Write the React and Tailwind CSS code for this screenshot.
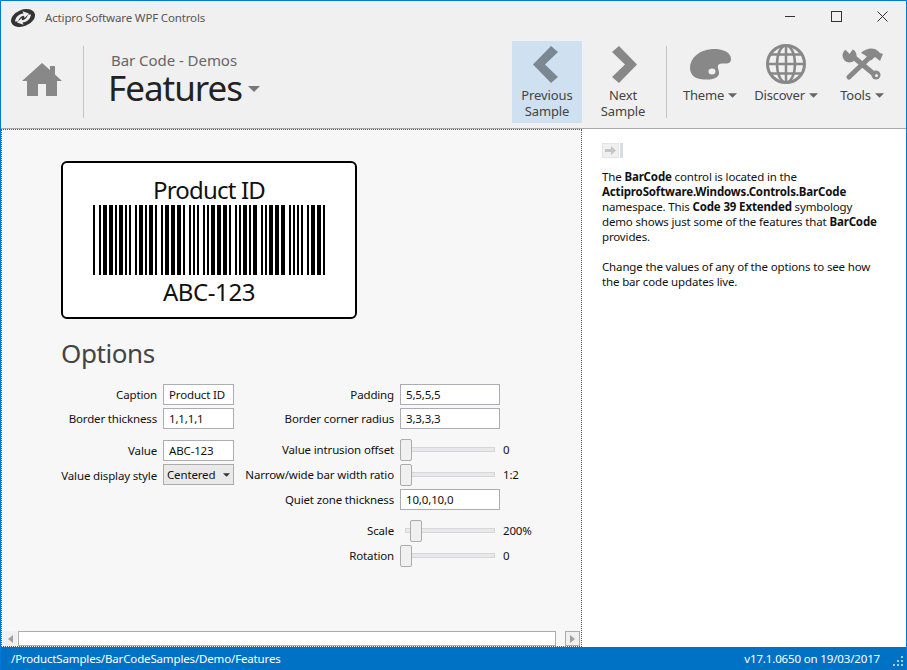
import React from 'react';

// code 39 patterns, n = narrow, w = wide, bars and spaces alternate
const CODE39 = {
  '*': 'nwnnwnwnn',
  A: 'wnnnnwnnw',
  B: 'nnwnnwnnw',
  C: 'wnwnnwnnn',
  '-': 'nwnnnnwnw',
  1: 'wnnwnnnnw',
  2: 'nnwwnnnnw',
  3: 'wnwwnnnnn',
};

const barRects = (text) => {
  const rects = [];
  let x = 0;
  text.split('').forEach((ch) => {
    CODE39[ch].split('').forEach((el, i) => {
      const w = el === 'w' ? 4 : 2;
      if (i % 2 === 0) rects.push({ x, w });
      x += w;
    });
    x += 2;
  });
  return rects;
};

const Barcode = () => (
  <svg width="232" height="70" viewBox="0 0 232 70" shapeRendering="crispEdges" className="block">
    {barRects('*ABC-123*').map((r) => (
      <rect key={r.x} x={r.x} y="0" width={r.w} height="70" fill="#000" />
    ))}
  </svg>
);

const Caret = ({ className = '' }) => (
  <svg viewBox="0 0 10 5" className={className}>
    <path d="M0 0h10L5 5z" fill="currentColor" />
  </svg>
);

const Logo = () => (
  <svg width="26" height="20" viewBox="0 0 26 20">
    <ellipse cx="13" cy="10" rx="12.5" ry="8.2" transform="rotate(-22 13 10)" fill="#333" />
    <path d="M5 13.5C5.5 9 9 6 13.5 5.5L12.5 3.2L19 5.5L14.5 10L14 7.8C11 8.2 9 10 8 13.5z" fill="#f0f0f0" />
    <path d="M21 6.5C20.5 11 17 14 12.5 14.5L13.5 16.8L7 14.5L11.5 10L12 12.2C15 11.8 17 10 18 6.5z" fill="#f0f0f0" />
  </svg>
);

const HomeIcon = () => (
  <svg width="40" height="33" viewBox="0 0 40 33">
    <path d="M20 0L28 7V3H33V11.500L40 18H35V33H24V21H16V33H5V18H0z" fill="#888" />
  </svg>
);

const PrevIcon = () => (
  <svg width="25" height="37" viewBox="0 0 25 37">
    <path d="M18 0L25 6L12 18.500L25 31L18 37L0 18.500z" fill="#7b8791" />
  </svg>
);

const NextIcon = () => (
  <svg width="25" height="37" viewBox="0 0 25 37">
    <path d="M7 0L0 6L13 18.500L0 31L7 37L25 18.500z" fill="#888" />
  </svg>
);

const PaletteIcon = () => (
  <svg width="41" height="31" viewBox="0 0 41 31">
    <path
      fillRule="evenodd"
      d="M0 19C0 9 9 1 22 0C32 -0.500 41 3 41 10C41 14 38 15 34 14.500C30 14 27 15 28 19C29 23 30 25 27 28C23 31 16 31 10 30C4 29 0 25 0 19ZM22 19.500A3.500 3 0 1 0 22 25.500A3.500 3 0 1 0 22 19.500Z"
      fill="#888"
    />
  </svg>
);

const GlobeIcon = () => (
  <svg width="40" height="40" viewBox="0 0 40 40" fill="none" stroke="#888" strokeWidth="2.500">
    <circle cx="20" cy="20" r="18.500" strokeWidth="3" />
    <ellipse cx="20" cy="20" rx="9" ry="18.500" />
    <path d="M20 2V38M2 20H38M5 10.500H35M5 29.500H35" />
  </svg>
);

const ToolsIcon = () => (
  <svg width="41" height="32" viewBox="0 0 41 32">
    <path d="M9 7L33 27" stroke="#888" strokeWidth="5" strokeLinecap="round" />
    <circle cx="7.500" cy="7.500" r="7" fill="#888" />
    <path d="M1 -1L7.500 6L12.500 -1z" fill="#f0f0f0" />
    <circle cx="34" cy="27" r="4.500" fill="#888" />
    <circle cx="34.500" cy="27.500" r="1.500" fill="#f0f0f0" />
    <path d="M26 11L7 29" stroke="#888" strokeWidth="5" strokeLinecap="round" />
    <path d="M19 5C24 0 32 -1 36 3L38 5L41 6L38 13L33 9L29 12.500L24 8C23 7 21 6 19 5z" fill="#888" />
  </svg>
);

const Label = ({ children, className = '' }) => (
  <div className={`text-right text-[#111] whitespace-nowrap ${className}`}>{children}</div>
);

const TextRow = ({ label, value, labelWidth, inputWidth }) => (
  <div className="flex items-center h-[21px]">
    <Label className={labelWidth}>{label}</Label>
    <div className={`ml-[6px] h-[21px] ${inputWidth} border border-[#abadb3] bg-white pl-[5px] leading-[19px] text-[#111]`}>
      {value}
    </div>
  </div>
);

const SelectRow = ({ label, value }) => (
  <div className="flex items-center h-[21px]">
    <Label className="w-[96px] mt-[3px]">{label}</Label>
    <div className="ml-[6px] h-[21px] w-[71px] border border-[#acacac] bg-[#e9e9e9] pl-[3px] pr-[3px] flex items-center justify-between text-[#111]">
      {value}
      <Caret className="w-[7px] h-[4px] text-[#333]" />
    </div>
  </div>
);

const SliderRow = ({ label, value, offset = false }) => (
  <div className="flex items-center h-[22px]">
    <Label className="w-[160px]">{label}</Label>
    <div className="ml-[6px] relative w-[95px] h-[22px]">
      <div className="absolute left-[5px] right-0 top-[8px] h-[5px] bg-[#e7eaea] border border-[#d6d6d6]"></div>
      <div
        className={`absolute top-0 h-[22px] w-[12px] bg-[#f0f0f0] border border-[#acacac] rounded-[2px] ${offset ? 'left-[10px]' : 'left-0'}`}
      ></div>
    </div>
    <div className="ml-[8px] text-[#111]">{value}</div>
  </div>
);

const NavButton = ({ icon, label, iconClass = '', active = false, className = '' }) => (
  <div
    className={`flex flex-col items-center h-[82px] pt-[5px] leading-[16px] text-[13px] tracking-[-0.1px] text-[#444] ${active ? 'bg-[#cfe1f0]' : ''} ${className}`}
  >
    <div className={`h-[37px] flex items-center justify-center mb-[4px] ${iconClass}`}>{icon}</div>
    {label.map((l) => (
      <div key={l}>{l}</div>
    ))}
  </div>
);

const MenuButton = ({ icon, label, className = '' }) => (
  <div className={`flex flex-col items-center w-[70px] text-[13px] tracking-[-0.2px] leading-[16px] text-[#444] ${className}`}>
    <div className="h-[40px] flex items-center justify-center mb-[3px]">{icon}</div>
    <div className="flex items-center gap-[4px]">
      {label}
      <Caret className="w-[9px] h-[5px] text-[#666]" />
    </div>
  </div>
);

export default function App() {
  return (
    <div className="w-[907px] h-[670px] flex flex-col bg-[#f0f0f0] border-x border-t border-[#0078d7] overflow-hidden text-[11.5px] tracking-[-0.15px] font-['Noto_Sans',sans-serif]">
      {/* title bar */}
      <div className="h-[34px] flex items-center shrink-0">
        <div className="ml-[9px] w-[35px]">
          <Logo />
        </div>
        <div className="text-[#555]">Actipro Software WPF Controls</div>
        <div className="ml-auto flex items-center -mt-[4px]">
          <div className="w-[10px] h-px bg-[#333] mr-[36px]"></div>
          <div className="w-[11px] h-[11px] border border-[#333] mr-[35px]"></div>
          <svg width="11" height="11" viewBox="0 0 11 11" className="mr-[18px]" stroke="#333" fill="none">
            <path d="M0.500 0.500L10.500 10.500M10.500 0.500L0.500 10.500" />
          </svg>
        </div>
      </div>

      {/* toolbar */}
      <div className="h-[94px] flex shrink-0 border-b border-[#a9a9a9]">
        <div className="w-[83px] h-[72px] mt-[11px] flex items-center justify-center border-r border-[#c4c4c4]">
          <div className="-mt-[5px]">
            <HomeIcon />
          </div>
        </div>
        <div className="ml-[25px] w-[403px] pt-[15px]">
          <div className="ml-[2px] text-[15px] tracking-[-0.05px] leading-[20px] text-[#666]">Bar Code - Demos</div>
          <div className="flex items-center -mt-[3px] -ml-px">
            <div className="text-[35px] tracking-[-1px] leading-[42px] text-[#222]">Features</div>
            <Caret className="ml-[6px] mt-[1px] w-[12px] h-[6px] text-[#777]" />
          </div>
        </div>
        <div className="flex items-start mt-[6px]">
          <NavButton active icon={<PrevIcon />} iconClass="-ml-[3px]" label={['Previous', 'Sample']} className="w-[70px]" />
          <NavButton icon={<NextIcon />} iconClass="ml-[3px]" label={['Next', 'Sample']} className="w-[70px] ml-[6px]" />
        </div>
        <div className="w-px h-[72px] bg-[#c4c4c4] mt-[11px] ml-[8px]"></div>
        <div className="flex items-start mt-[9px]">
          <MenuButton icon={<PaletteIcon />} label="Theme" className="ml-[8px]" />
          <MenuButton icon={<GlobeIcon />} label="Discover" className="ml-[6px]" />
          <MenuButton icon={<ToolsIcon />} label="Tools" className="ml-[6px]" />
        </div>
      </div>

      {/* body */}
      <div className="flex-1 flex min-h-0">
        <div className="w-[581px] flex flex-col bg-[#f7f7f7] border border-dotted border-[#555] shrink-0">
          <div className="flex-1 min-h-0 pl-[59px] pt-[31px]">
            <div className="w-[296px] h-[158px] rounded-[6px] border-2 border-black bg-white flex flex-col items-center">
              <div className="text-[24px] tracking-[-0.8px] leading-[30px] mt-[12px] text-[#111]">Product ID</div>
              <div>
                <Barcode />
              </div>
              <div className="text-[24px] tracking-[-0.4px] leading-[30px] mt-[2px] text-[#111]">ABC-123</div>
            </div>
            <div className="mt-[16px] text-[26px] tracking-[-0.4px] leading-[36px] text-[#444]">Options</div>

            <div className="flex mt-[13px]">
              {/* left options column */}
              <div className="w-[173px] shrink-0 flex flex-col gap-[3px]">
                <TextRow label="Caption" value="Product ID" labelWidth="w-[96px]" inputWidth="w-[71px]" />
                <TextRow label="Border thickness" value="1,1,1,1" labelWidth="w-[96px]" inputWidth="w-[71px]" />
                <div className="mt-[8px]">
                  <TextRow label="Value" value="ABC-123" labelWidth="w-[96px]" inputWidth="w-[71px]" />
                </div>
                <SelectRow label="Value display style" value="Centered" />
              </div>

              {/* right options column */}
              <div className="flex flex-col gap-[3px]">
                <TextRow label="Padding" value="5,5,5,5" labelWidth="w-[160px]" inputWidth="w-[100px]" />
                <TextRow label="Border corner radius" value="3,3,3,3" labelWidth="w-[160px]" inputWidth="w-[100px]" />
                <div className="mt-[7px]">
                  <SliderRow label="Value intrusion offset" value="0" />
                </div>
                <SliderRow label="Narrow/wide bar width ratio" value="1:2" />
                <TextRow label="Quiet zone thickness" value="10,0,10,0" labelWidth="w-[160px]" inputWidth="w-[100px]" />
                <div className="mt-[7px]">
                  <SliderRow label="Scale" value="200%" offset />
                </div>
                <SliderRow label="Rotation" value="0" />
              </div>
            </div>
          </div>

          {/* scrollbar */}
          <div className="h-[15px] flex items-stretch shrink-0 pl-[1px] pr-px">
            <div className="w-[14px] flex items-center justify-center bg-[#f0f0f0]">
              <div className="w-0 h-0 border-y-[4px] border-y-transparent border-r-[5px] border-r-[#a0a0a0]"></div>
            </div>
            <div className="w-[538px] ml-px bg-white border border-[#acacac]"></div>
            <div className="flex-1"></div>
            <div className="w-[15px] flex items-center justify-center bg-[#f0f0f0] border border-[#acacac]">
              <div className="w-0 h-0 border-y-[4px] border-y-transparent border-l-[5px] border-l-[#a0a0a0]"></div>
            </div>
          </div>
        </div>

        {/* description */}
        <div className="flex-1 bg-white pl-[20px] pr-[26px] pt-[14px] leading-[15px] text-[#111]">
          <div className="flex items-center w-[21px] h-[15px] mb-[11px]">
            <div className="w-[17px] h-[15px] bg-[#f0f0f0] border border-[#e4e4e4] flex items-center justify-center">
              <svg width="11" height="9" viewBox="0 0 11 9">
                <path d="M0 3H6V0L11 4.500L6 9V6H0z" fill="#c4c4c4" />
              </svg>
            </div>
            <div className="w-[3px] h-[15px] bg-[#d4dde4] ml-px"></div>
          </div>
          <p>
            The <b>BarCode</b> control is located in the <b>ActiproSoftware.Windows.Controls.BarCode</b> namespace. This{' '}
            <b>Code 39 Extended</b> symbology demo shows just some of the features that <b>BarCode</b> provides.
          </p>
          <p className="mt-[15px]">Change the values of any of the options to see how the bar code updates live.</p>
        </div>
      </div>

      {/* status bar */}
      <div className="h-[23px] -mx-px shrink-0 bg-[#0072c6] text-white flex items-center pl-[11px] pr-[4px]">
        <div>/ProductSamples/BarCodeSamples/Demo/Features</div>
        <div className="ml-auto">v17.1.0650 on 19/03/2017</div>
        <svg width="10" height="10" viewBox="0 0 10 10" className="ml-[13px] mt-[4px]" fill="#a8cdea">
          <rect x="8" y="0" width="2" height="2" />
          <rect x="4" y="4" width="2" height="2" />
          <rect x="8" y="4" width="2" height="2" />
          <rect x="0" y="8" width="2" height="2" />
          <rect x="4" y="8" width="2" height="2" />
          <rect x="8" y="8" width="2" height="2" />
        </svg>
      </div>
    </div>
  );
}
